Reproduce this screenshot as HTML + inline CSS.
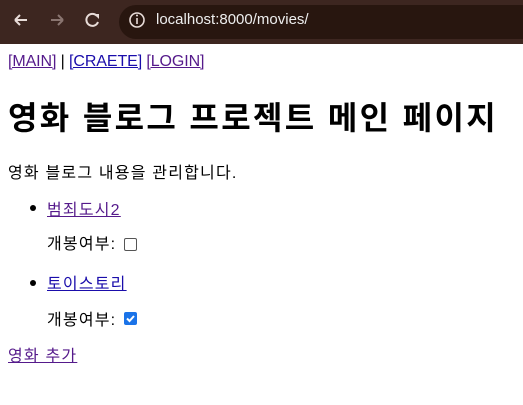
<!DOCTYPE html>
<html><head><meta charset="utf-8"><style>
*{margin:0;padding:0}
body{width:523px;height:405px;overflow:hidden;background:#fff;font-family:"Liberation Sans","Noto Sans CJK KR",sans-serif;font-size:16px;color:#000;position:relative}
.bar{position:absolute;left:0;top:0;width:523px;height:44px;background:#3d2620}
.pill{position:absolute;left:119px;top:5px;width:420px;height:34px;border-radius:17px;background:#28160f}
.url{position:absolute;left:156px;top:11px;color:#eee;font-size:15px}
.t{position:absolute;white-space:nowrap}
.k{letter-spacing:1.2px}
a{color:#551a8b;text-decoration:underline}
a.b{color:#1a0dab}
.dot{position:absolute;width:6px;height:6px;border-radius:3px;background:#000}
.cb{position:absolute;width:11px;height:11px;border:1px solid #555;border-radius:2px;background:#fff}
.cbc{position:absolute;width:13px;height:13px;border-radius:2px;background:#1a73e8}
</style></head><body>
<div class="bar"></div>
<div class="pill"></div>
<svg style="position:absolute;left:0;top:0" width="150" height="44">
<path d="M15 20h12M15 20l5-5M15 20l5 5" stroke="#e8dcd8" stroke-width="2" fill="none"/>
<path d="M51 20h12M63 20l-5-5M63 20l-5 5" stroke="#8a7570" stroke-width="2" fill="none"/>
<path d="M97 16a6 6 0 1 0 1 6" stroke="#e8dcd8" stroke-width="2" fill="none"/><path d="M94 14h5v5z" fill="#e8dcd8"/>
<circle cx="137" cy="20" r="7" stroke="#e8dcd8" stroke-width="1.6" fill="none"/>
<path d="M137 18v6" stroke="#e8dcd8" stroke-width="1.6"/><circle cx="137" cy="15.5" r="1" fill="#e8dcd8"/>
</svg>
<div class="url">localhost:8000/movies/</div>
<div class="t" style="left:8px;top:53px;letter-spacing:-0.1px"><a>[MAIN]</a> | <a class="b">[CRAETE]</a> <a>[LOGIN]</a></div>
<div class="t" style="left:8px;top:93px;font-size:32px;font-weight:bold;letter-spacing:2.35px">영화 블로그 프로젝트 메인 페이지</div>
<div class="t k" style="left:8px;top:159px">영화 블로그 내용을 관리합니다.</div>
<div class="dot" style="left:30px;top:205px"></div>
<div class="t k" style="left:47px;top:196px"><a>범죄도시2</a></div>
<div class="t k" style="left:47px;top:230px">개봉여부:</div>
<div class="cb" style="left:124px;top:238px"></div>
<div class="dot" style="left:30px;top:280px"></div>
<div class="t k" style="left:47px;top:270px"><a class="b">토이스토리</a></div>
<div class="t k" style="left:47px;top:306px">개봉여부:</div>
<div class="cbc" style="left:124px;top:312px"><svg width="13" height="13"><path d="M3 6.5l2.5 2.5 4.5-5" stroke="#fff" stroke-width="2" fill="none"/></svg></div>
<div class="t k" style="left:8px;top:342px"><a>영화 추가</a></div>
</body></html>
